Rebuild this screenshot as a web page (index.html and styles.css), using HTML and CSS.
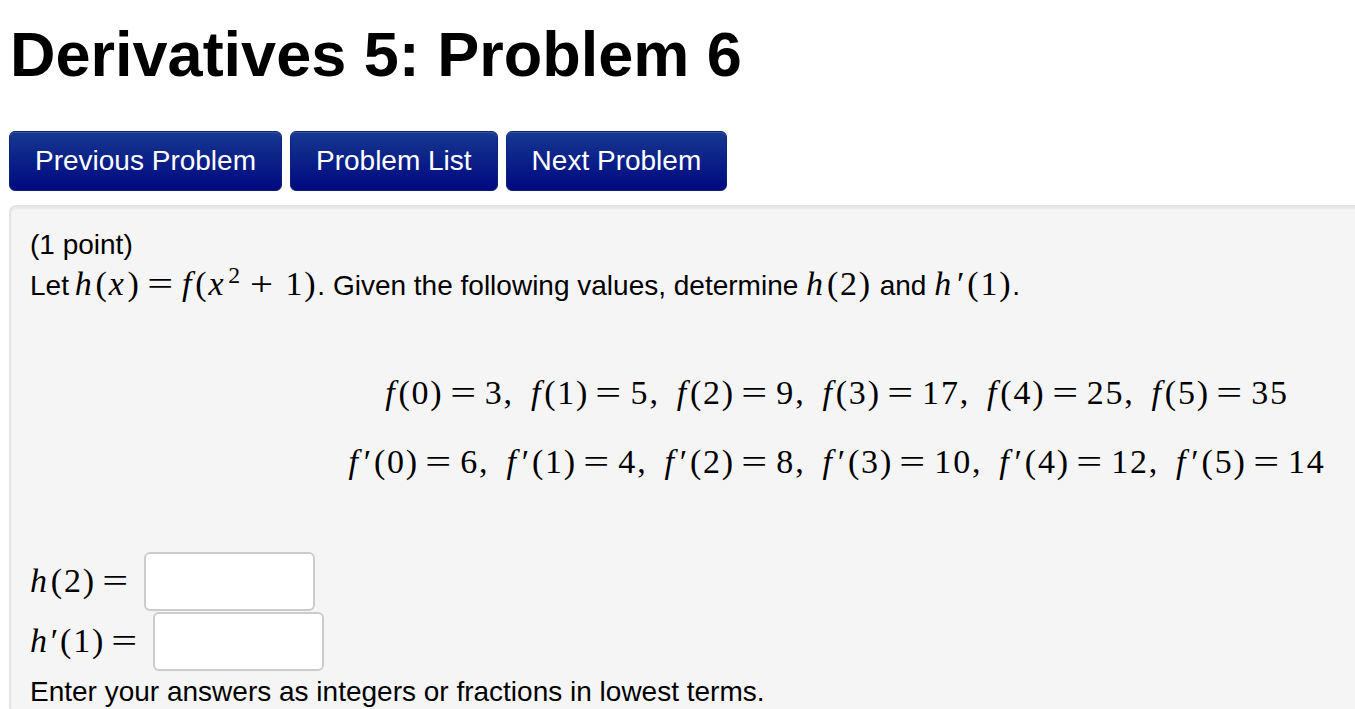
FILE: index.html
```html
<!DOCTYPE html>
<html>
<head>
<meta charset="utf-8">
<link rel="stylesheet" href="styles.css">
</head>
<body>
<h1 class="title">Derivatives 5: Problem 6</h1>
<div class="nav">
  <a class="btn">Previous Problem</a>
  <a class="btn">Problem List</a>
  <a class="btn">Next Problem</a>
</div>
<div class="well">
  <div class="line">(1 point)</div>
  <div class="line">Let <span class="m first"><i>h</i>(<i>x</i>)<span class="rel">=</span><i>f</i>(<i>x</i><sup>2</sup><span class="bin">+</span>1)</span>. Given the following values, determine <span class="m"><i>h</i>(2)</span> and <span class="m"><i>h</i><span class="pr">′</span>(1)</span>.</div>
  <div class="display">
    <div class="mrow m"><i>f</i>(0)<span class="rel">=</span>3,<span class="sp"></span><i>f</i>(1)<span class="rel">=</span>5,<span class="sp"></span><i>f</i>(2)<span class="rel">=</span>9,<span class="sp"></span><i>f</i>(3)<span class="rel">=</span>17,<span class="sp"></span><i>f</i>(4)<span class="rel">=</span>25,<span class="sp"></span><i>f</i>(5)<span class="rel">=</span>35</div>
    <div class="mrow m"><i>f</i><span class="pr">′</span>(0)<span class="rel">=</span>6,<span class="sp"></span><i>f</i><span class="pr">′</span>(1)<span class="rel">=</span>4,<span class="sp"></span><i>f</i><span class="pr">′</span>(2)<span class="rel">=</span>8,<span class="sp"></span><i>f</i><span class="pr">′</span>(3)<span class="rel">=</span>10,<span class="sp"></span><i>f</i><span class="pr">′</span>(4)<span class="rel">=</span>12,<span class="sp"></span><i>f</i><span class="pr">′</span>(5)<span class="rel">=</span>14</div>
  </div>
  <div class="ans"><span class="m"><i>h</i>(2)<span class="rel">=</span></span><span class="box"></span></div>
  <div class="ans"><span class="m"><i>h</i><span class="pr">′</span>(1)<span class="rel">=</span></span><span class="box"></span></div>
  <div class="line">Enter your answers as integers or fractions in lowest terms.</div>
</div>
</body>
</html>
```
FILE: styles.css
```css
html, body { overflow: hidden; }
body {
  margin: 0;
  padding: 0 0 0 9px;
  font-family: "Liberation Sans", Arial, sans-serif;
  color: #000;
  background: #fff;
  width: 1700px;
}
.title {
  font-size: 63px;
  font-weight: bold;
  margin: 0;
  padding: 18px 0 0 1px;
  line-height: 72px;
}
.nav {
  display: flex;
  gap: 8px;
  margin-top: 41px;
}
.btn {
  display: flex;
  align-items: center;
  height: 60px;
  box-sizing: border-box;
  padding: 0 25px;
  font-size: 28px;
  color: #fff;
  background: linear-gradient(#163890, #000880);
  border: 1px solid #0a2578;
  border-radius: 6px;
  box-shadow: inset 0 1px 0 rgba(255,255,255,0.15);
}
.well {
  margin-top: 14px;
  width: 1656px;
  box-sizing: border-box;
  background: #f5f5f5;
  border: 2px solid #e3e3e3;
  border-radius: 7px;
  box-shadow: inset 0 2px 2px rgba(0,0,0,0.05);
  padding: 17px 19px 0 19px;
  font-size: 28px;
}
.line { height: 41px; line-height: 41px; }
.line .m { line-height: 0; }
.m {
  font-family: "Liberation Serif", "Times New Roman", serif;
  font-size: 34px;
  letter-spacing: 1.8px;
}
.m.first { margin-left: -2px; }
.m i { font-style: italic; margin-right: 2px; }
.rel { display: inline-block; margin: 0 0.3em; transform: scaleX(1.35); }
.bin { display: inline-block; margin: 0 0.36em 0 0.3em; transform: scaleX(1.2); }
.pr { margin: 0 1px 0 2px; }
.sp { display: inline-block; width: 0.5em; }
sup { font-size: 0.7em; line-height: 0; vertical-align: 0.5em; margin-left: 1px; }
.display {
  padding: 52px 0 55px;
  text-align: center;
}
.mrow { display: block; height: 69px; line-height: 69px; }
.ans {
  display: flex;
  align-items: center;
  height: 60px;
}
.ans .m { margin-right: 7px; line-height: 1; }
.ans .pr { margin: 0; }
.box {
  display: inline-block;
  width: 171px;
  height: 59px;
  box-sizing: border-box;
  background: #fff;
  border: 2px solid #ccc;
  border-radius: 6px;
}
```
